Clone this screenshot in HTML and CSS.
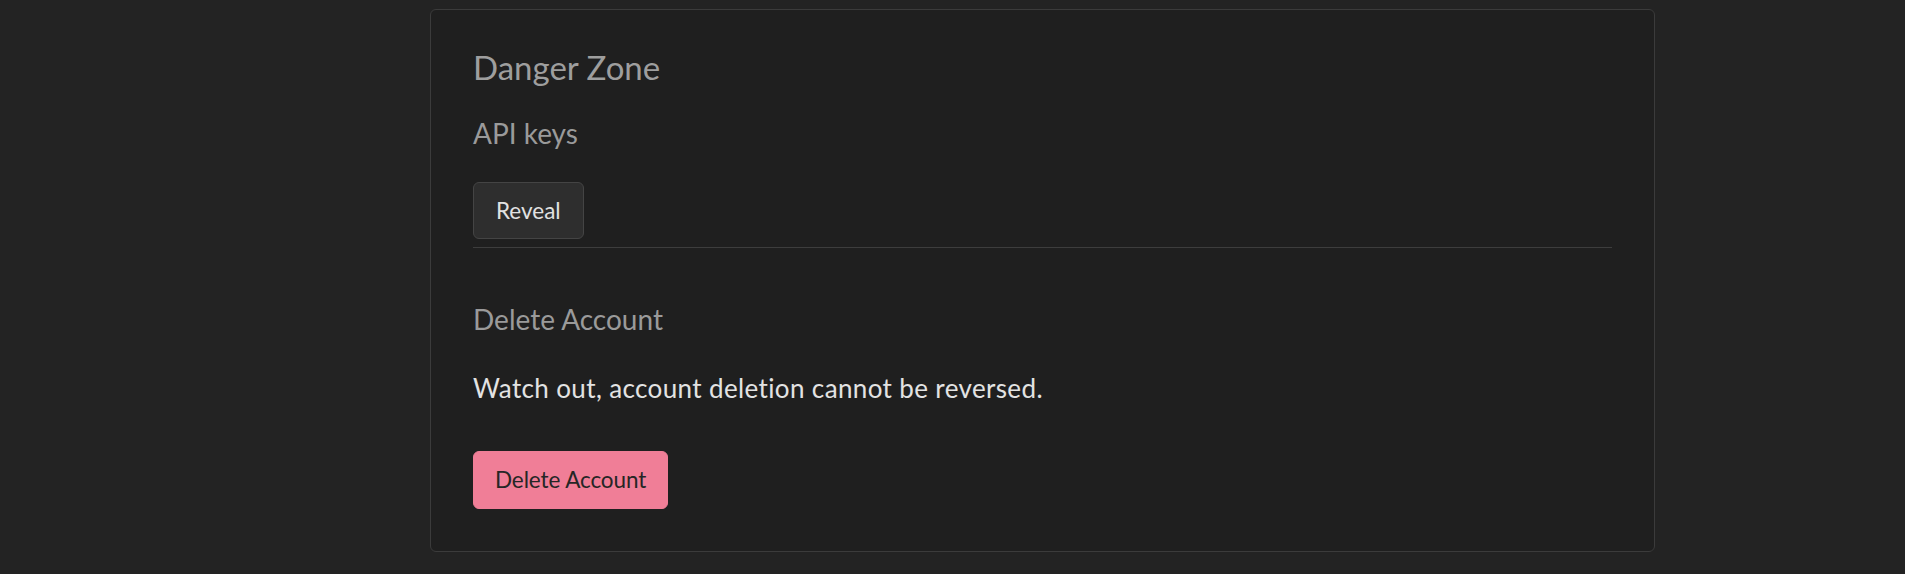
FILE: index.html
```html
<!DOCTYPE html>
<html lang="en">
<head>
<meta charset="utf-8">
<title>Danger Zone</title>
<link rel="stylesheet" href="styles.css">
</head>
<body>
<main class="page">
  <section class="card">
    <h2 class="card-title">Danger Zone</h2>
    <h3 class="section-title">API keys</h3>
    <button class="btn btn-secondary" type="button">Reveal</button>
    <hr class="divider">
    <h3 class="section-title section-title--delete">Delete Account</h3>
    <p class="warning">Watch out, account deletion cannot be reversed.</p>
    <button class="btn btn-danger" type="button">Delete Account</button>
  </section>
</main>
</body>
</html>
```

FILE: styles.css
```css
html, body {
  margin: 0;
  padding: 0;
  background: #232323;
  font-family: "Lato", "Liberation Sans", sans-serif;
}

.page {
  padding: 9px 0 0 430px;
}

.card {
  width: 1225px;
  box-sizing: border-box;
  background: #1f1f1f;
  border: 1px solid #3b3b3b;
  border-radius: 6px;
  padding: 38px 42px 42px 42px;
  display: flex;
  flex-direction: column;
  align-items: flex-start;
}

.card-title {
  margin: 0;
  font-size: 33px;
  line-height: 1.2;
  font-weight: 400;
  color: #9e9e9e;
}

.section-title {
  margin: 29px 0 0 0;
  font-size: 28px;
  line-height: 1.2;
  font-weight: 400;
  color: #9a9a9a;
}

.section-title--delete {
  margin-top: 55px;
}

.btn {
  box-sizing: border-box;
  font-family: inherit;
  font-size: 22.5px;
  line-height: 1.2;
  border-radius: 6px;
  padding: 0 22px;
  cursor: pointer;
}

.btn-secondary {
  margin-top: 32px;
  height: 57px;
  background: #2e2e2e;
  border: 1px solid #444444;
  color: #e2e2e2;
}

.btn-danger {
  margin-top: 47px;
  height: 58px;
  padding: 0 21px;
  letter-spacing: -0.1px;
  background: #f07e97;
  border: 1px solid #f07e97;
  color: #262626;
}

.divider {
  align-self: stretch;
  margin: 8px 0 0 0;
  border: 0;
  height: 1px;
  background: #3d3d3d;
}

.warning {
  margin: 36px 0 0 0;
  font-size: 26px;
  letter-spacing: 0.37px;
  line-height: 1.2;
  color: #e3e3e3;
}
```
